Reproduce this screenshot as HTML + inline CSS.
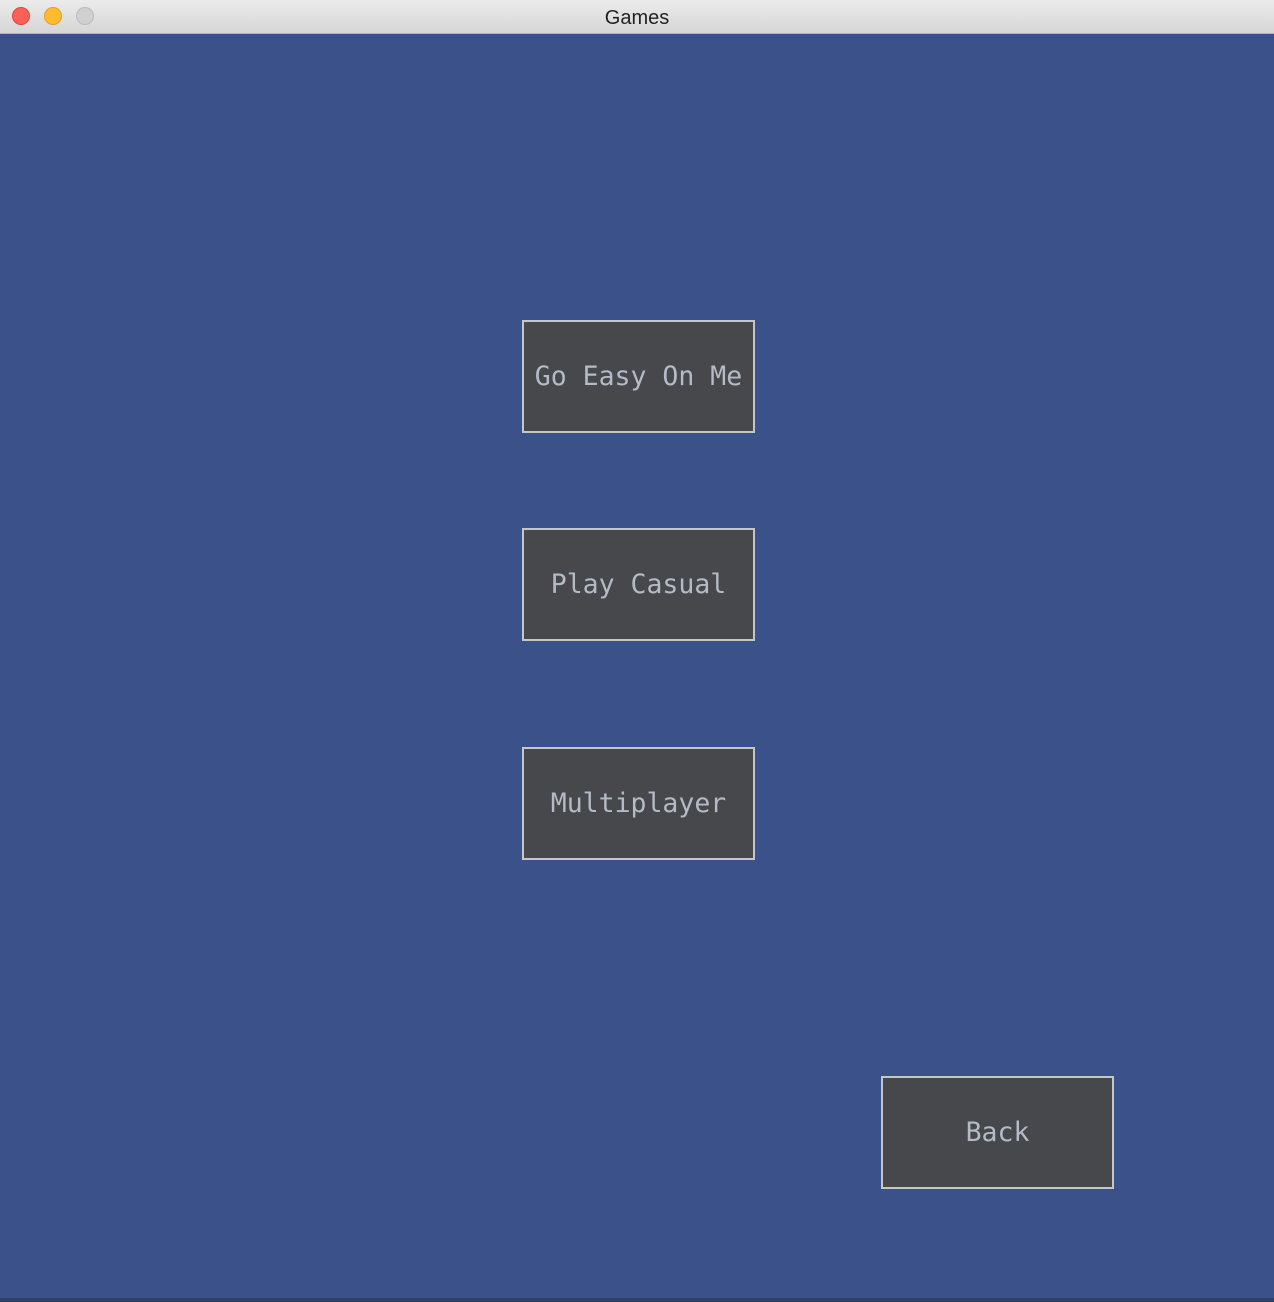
<!DOCTYPE html>
<html><head><style>
html,body{margin:0;padding:0;width:1274px;height:1302px;overflow:hidden;background:#3a5189;font-family:"Liberation Sans",sans-serif}
.tb{position:absolute;left:0;top:0;width:1274px;height:33px;background:linear-gradient(#ebebeb,#d6d6d6);border-bottom:1px solid #b5b5b5;text-align:center;line-height:36px;font-size:20px;color:#222}
.d{position:absolute;top:7px;width:18px;height:18px;border-radius:50%;box-sizing:border-box}
.main{position:absolute;left:0;top:34px;width:1274px;height:1264px;background:#3a5189}
.bot{position:absolute;left:0;top:1298px;width:1274px;height:4px;background:#2f3f66}
.b{position:absolute;width:233px;height:113px;box-sizing:border-box;border:2px solid #c4c6ca;background:#46484c;color:#b4bac6;font-family:"DejaVu Sans Mono","Liberation Mono",monospace;font-size:26.5px;display:flex;align-items:center;justify-content:center;white-space:pre}
</style></head><body>
<div class="tb">Games</div>
<div class="d" style="left:12px;background:#fe5f57;border:1px solid #e0443e"></div>
<div class="d" style="left:44px;background:#febc2e;border:1px solid #dea123"></div>
<div class="d" style="left:76px;background:#d0d0d0;border:1px solid #bbb"></div>
<div class="main"></div>
<div class="bot"></div>
<div class="b" style="left:522px;top:320px">Go Easy On Me</div>
<div class="b" style="left:522px;top:528px">Play Casual</div>
<div class="b" style="left:522px;top:747px">Multiplayer</div>
<div class="b" style="left:881px;top:1076px">Back</div>
</body></html>
